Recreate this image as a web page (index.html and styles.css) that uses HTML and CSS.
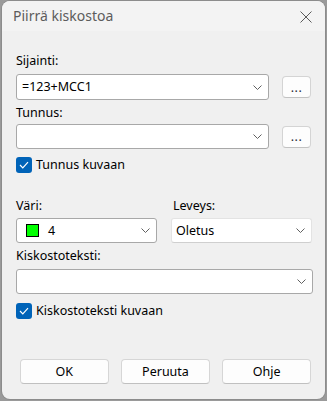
FILE: index.html
```html
<!DOCTYPE html>
<html lang="fi">
<head>
<meta charset="utf-8">
<title>Piirrä kiskostoa</title>
<link rel="stylesheet" href="styles.css">
</head>
<body>
<div class="dialog">
  <div class="titlebar">
    <span class="title">Piirrä kiskostoa</span>
    <svg class="close" width="12" height="12" viewBox="0 0 12 12"><path d="M0.5 0.5 L11.5 11.5 M11.5 0.5 L0.5 11.5" stroke="#5a5a5a" stroke-width="1" fill="none"/></svg>
  </div>
  <div class="content">
    <div class="label l-sijainti">Sijainti:</div>
    <div class="row">
      <div class="combo combo-main"><span class="value">=123+MCC1</span><svg class="chev" width="9" height="5" viewBox="0 0 9 5"><path d="M0.5 0.5 L4.5 4.5 L8.5 0.5" stroke="#606060" fill="none"/></svg></div>
      <div class="dots">...</div>
    </div>
    <div class="label l-tunnus">Tunnus:</div>
    <div class="row">
      <div class="combo combo-main c2"><span class="value"></span><svg class="chev" width="9" height="5" viewBox="0 0 9 5"><path d="M0.5 0.5 L4.5 4.5 L8.5 0.5" stroke="#606060" fill="none"/></svg></div>
      <div class="dots">...</div>
    </div>
    <div class="check c-tunnus"><span class="box"><svg width="10" height="8" viewBox="0 0 10 8"><path d="M1 4 L3.8 6.8 L9 1.2" stroke="#fff" stroke-width="1.2" fill="none"/></svg></span><span>Tunnus kuvaan</span></div>
    <div class="pair">
      <div class="col">
        <div class="label">Väri:</div>
        <div class="combo"><span class="value"><span class="swatch"></span>4</span><svg class="chev" width="9" height="5" viewBox="0 0 9 5"><path d="M0.5 0.5 L4.5 4.5 L8.5 0.5" stroke="#606060" fill="none"/></svg></div>
      </div>
      <div class="col col-right">
        <div class="label">Leveys:</div>
        <div class="combo combo-btn"><span class="value">Oletus</span><svg class="chev" width="9" height="5" viewBox="0 0 9 5"><path d="M0.5 0.5 L4.5 4.5 L8.5 0.5" stroke="#606060" fill="none"/></svg></div>
      </div>
    </div>
    <div class="label l-kisko">Kiskostoteksti:</div>
    <div class="combo c3"><span class="value"></span><svg class="chev" width="9" height="5" viewBox="0 0 9 5"><path d="M0.5 0.5 L4.5 4.5 L8.5 0.5" stroke="#606060" fill="none"/></svg></div>
    <div class="check c-kisko"><span class="box"><svg width="10" height="8" viewBox="0 0 10 8"><path d="M1 4 L3.8 6.8 L9 1.2" stroke="#fff" stroke-width="1.2" fill="none"/></svg></span><span>Kiskostoteksti kuvaan</span></div>
    <div class="footer">
      <div class="btn">OK</div>
      <div class="btn">Peruuta</div>
      <div class="btn">Ohje</div>
    </div>
  </div>
</div>
</body>
</html>
```
FILE: styles.css
```css
html, body {
  margin: 0;
  padding: 0;
}
body {
  width: 327px;
  height: 401px;
  background: #9a9a9a;
  font-family: "Noto Sans", "Open Sans", sans-serif;
  font-size: 12.5px;
  color: #000;
  overflow: hidden;
}
.dialog {
  margin: 1px 0 0 2px;
  width: 323px;
  height: 398px;
  box-sizing: border-box;
  background: #f0f0f0;
  border-radius: 8px;
  box-shadow: 0 0 0 1px #8c8c8c;
  display: flex;
  flex-direction: column;
  overflow: hidden;
}
.titlebar {
  height: 30px;
  background: #f3f3f3;
  display: flex;
  align-items: center;
  justify-content: space-between;
  padding: 0 13px 0 11px;
  flex: none;
}
.title {
  font-size: 14px;
  color: #5c5c5c;
  line-height: 18px;
}
.close {
  display: block;
  margin-top: 2px;
}
.content {
  flex: 1;
  display: flex;
  flex-direction: column;
  padding: 0 12px 15px 14px;
}
.label {
  line-height: 16px;
  height: 16px;
}
.l-sijainti { margin-top: 22px; margin-bottom: 5px; }
.l-tunnus { margin-top: 5px; margin-bottom: 3px; }
.row {
  display: flex;
  align-items: center;
  gap: 13px;
}
.combo {
  height: 26px;
  box-sizing: border-box;
  background: #fff;
  border: 1px solid #a8a8a8;
  border-radius: 3px;
  display: flex;
  align-items: center;
  justify-content: space-between;
  padding: 0 6px 0 5px;
}
.combo-main {
  width: 253px;
}
.c2 { height: 25px; }
.value {
  display: flex;
  align-items: center;
  line-height: 16px;
}
.chev { display: block; }
.dots {
  width: 29px;
  height: 22px;
  box-sizing: border-box;
  background: #fdfdfd;
  border: 1px solid #d4d4d4;
  border-bottom-color: #c2c2c2;
  border-radius: 4px;
  display: flex;
  align-items: center;
  justify-content: center;
  font-size: 12.5px;
  color: #2a2a3a;
  letter-spacing: 0.5px;
  line-height: 12px;
  padding-top: 1px;
}
.check {
  display: flex;
  align-items: center;
  gap: 4px;
  line-height: 16px;
  height: 16px;
}
.c-tunnus { margin-top: 8px; }
.c-kisko { margin-top: 9px; }
.box {
  width: 16px;
  height: 16px;
  box-sizing: border-box;
  background: #0063b8;
  border-radius: 3px;
  display: flex;
  align-items: center;
  justify-content: center;
}
.pair {
  display: flex;
  gap: 14px;
  margin-top: 25px;
}
.col {
  width: 141px;
  display: flex;
  flex-direction: column;
  gap: 4px;
}
.col .combo {
  height: 25px;
}
.col-right .label { padding-left: 2px; }
.combo-btn {
  border-color: #e3e3e3;
  border-bottom-color: #cfcfcf;
  padding-left: 4px;
}
.swatch {
  width: 13px;
  height: 13px;
  box-sizing: border-box;
  background: #00ff00;
  border: 1px solid #000;
  margin: 0 9px 0 4px;
}
.l-kisko { margin-top: 5px; margin-bottom: 5px; }
.c3 { height: 25px; width: 297px; }
.footer {
  margin-top: auto;
  display: grid;
  grid-template-columns: 1fr 1fr 1fr;
  gap: 12.5px;
  padding: 0 2px 0 4px;
}
.btn {
  height: 25px;
  box-sizing: border-box;
  background: #fdfdfd;
  border: 1px solid #d6d6d6;
  border-bottom-color: #c0c0c0;
  border-radius: 4px;
  display: flex;
  align-items: center;
  justify-content: center;
  line-height: 16px;
}
```
